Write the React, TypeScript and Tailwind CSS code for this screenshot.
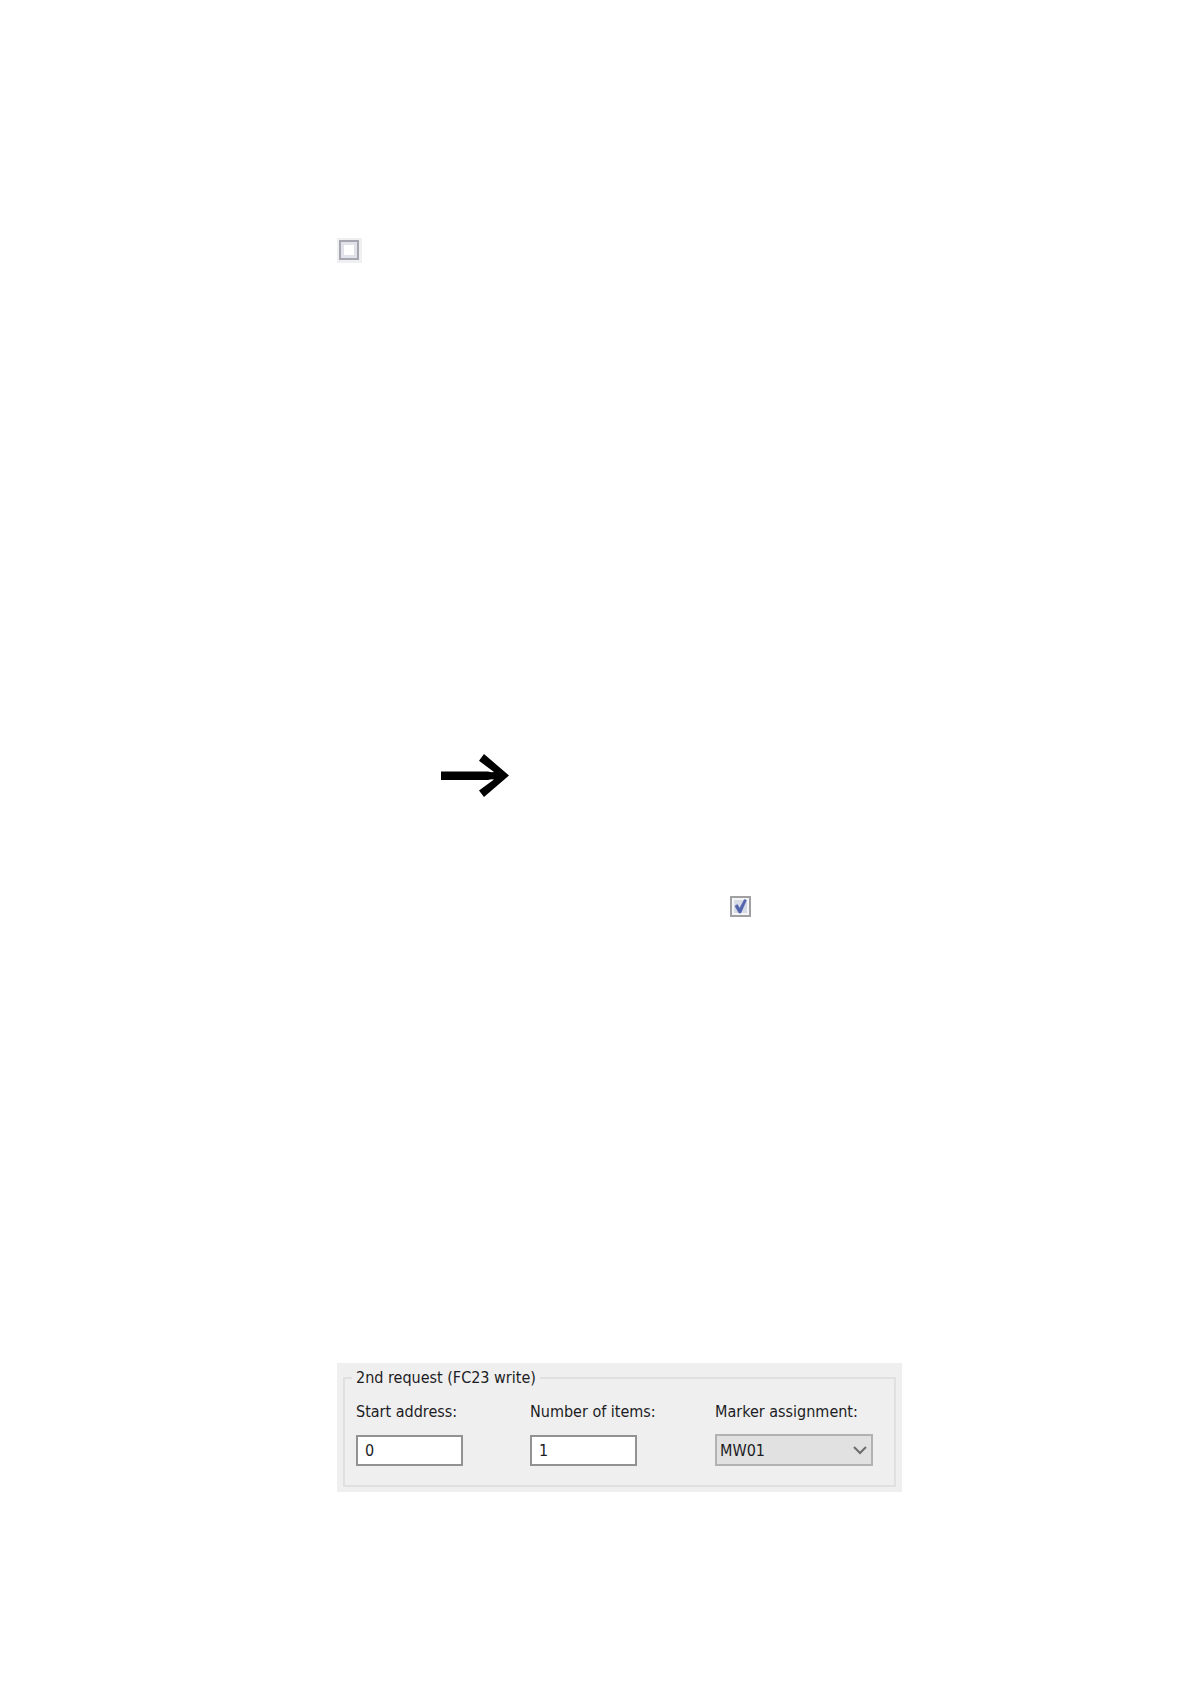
import { useState } from "react";

function Tick() {
  return (
    <svg viewBox="0 0 21 21" className="pointer-events-none absolute inset-0 size-full" aria-hidden="true">
      <path d="M5 10 L7.4 8.6 L9.6 12.4 L14.4 3.6 L16.4 4.2 L10.8 17 L9 17 Z" fill="#5163ad" stroke="#5163ad" strokeWidth="0.6" />
    </svg>
  );
}

function NumberField({ id, label, value }: { id: string; label: string; value: string }) {
  return (
    <div className="flex flex-col items-start">
      <label htmlFor={id} className="h-6 leading-6 whitespace-nowrap">{label}</label>
      <input
        id={id}
        defaultValue={value}
        className="mt-[11px] h-[31px] w-[107px] border-2 border-[#929292] bg-white px-[7px] outline-none"
      />
    </div>
  );
}

export default function App() {
  const [enabled, setEnabled] = useState(true);
  return (
    <main className="min-h-screen bg-white pt-[238px] pr-[289px] pb-48 pl-[337px] font-['DejaVu_Sans_Condensed','Noto_Sans',sans-serif] text-base text-[#1c1c24]">
      <div className="size-[25px] bg-[#f0f0f2] p-[2px]">
        <input
          type="checkbox"
          aria-label="Option off"
          className="block size-5 appearance-none border-2 border-[#a6a6b0] bg-white shadow-[inset_0_0_0_3px_#e2e2ea] checked:bg-[#4358a8]"
        />
      </div>

      <svg viewBox="0 0 68 44" className="mt-[491px] ml-26 h-11 w-17" aria-hidden="true">
        <path d="M0 17.5 H47 Q50 18.5 53 18 L38 6.8 L43 0 L68 21.5 L43 43 L38 36.6 L53 25.5 Q50 25 47 26 H0 Z" fill="#000" />
      </svg>

      <div className="relative mt-[98px] ml-[393px] size-[21px]">
        <input
          type="checkbox"
          aria-label="Option on"
          checked={enabled}
          onChange={(e) => setEnabled(e.target.checked)}
          className="block size-full appearance-none border-2 border-[#a0a0a2] bg-[#d6dbe6] shadow-[inset_0_0_0_2px_#f5f5f7]"
        />
        {enabled && <Tick />}
      </div>

      <form className="mt-[446px] bg-[#efefef] px-[6px] pt-[3px] pb-[5px]">
        <fieldset className="border-2 border-[#e0e0e0] pr-3 pb-[19px] pl-[11px]">
          <legend className="-ml-1 px-1 leading-6">2nd request (FC23 write)</legend>
          <div className="mt-[10px] grid grid-cols-[174fr_185fr_167fr]">
            <NumberField id="start" label="Start address:" value="0" />
            <NumberField id="items" label="Number of items:" value="1" />
            <div className="flex flex-col items-start">
              <label htmlFor="marker" className="h-6 leading-6 whitespace-nowrap">Marker assignment:</label>
              <div className="relative mt-[10px]">
                <select
                  id="marker"
                  defaultValue="MW01"
                  className="block h-8 w-[158px] appearance-none border-2 border-[#b2b2b2] bg-[#e1e1e1] px-[3px] pt-px outline-none"
                >
                  <option>MW01</option>
                </select>
                <svg viewBox="0 0 14 9" className="pointer-events-none absolute top-3 right-[6px] h-[9px] w-[14px]" aria-hidden="true">
                  <path d="M1 1 L7 7 L13 1" fill="none" stroke="#6c6c6c" strokeWidth="2" />
                </svg>
              </div>
            </div>
          </div>
        </fieldset>
      </form>
    </main>
  );
}
